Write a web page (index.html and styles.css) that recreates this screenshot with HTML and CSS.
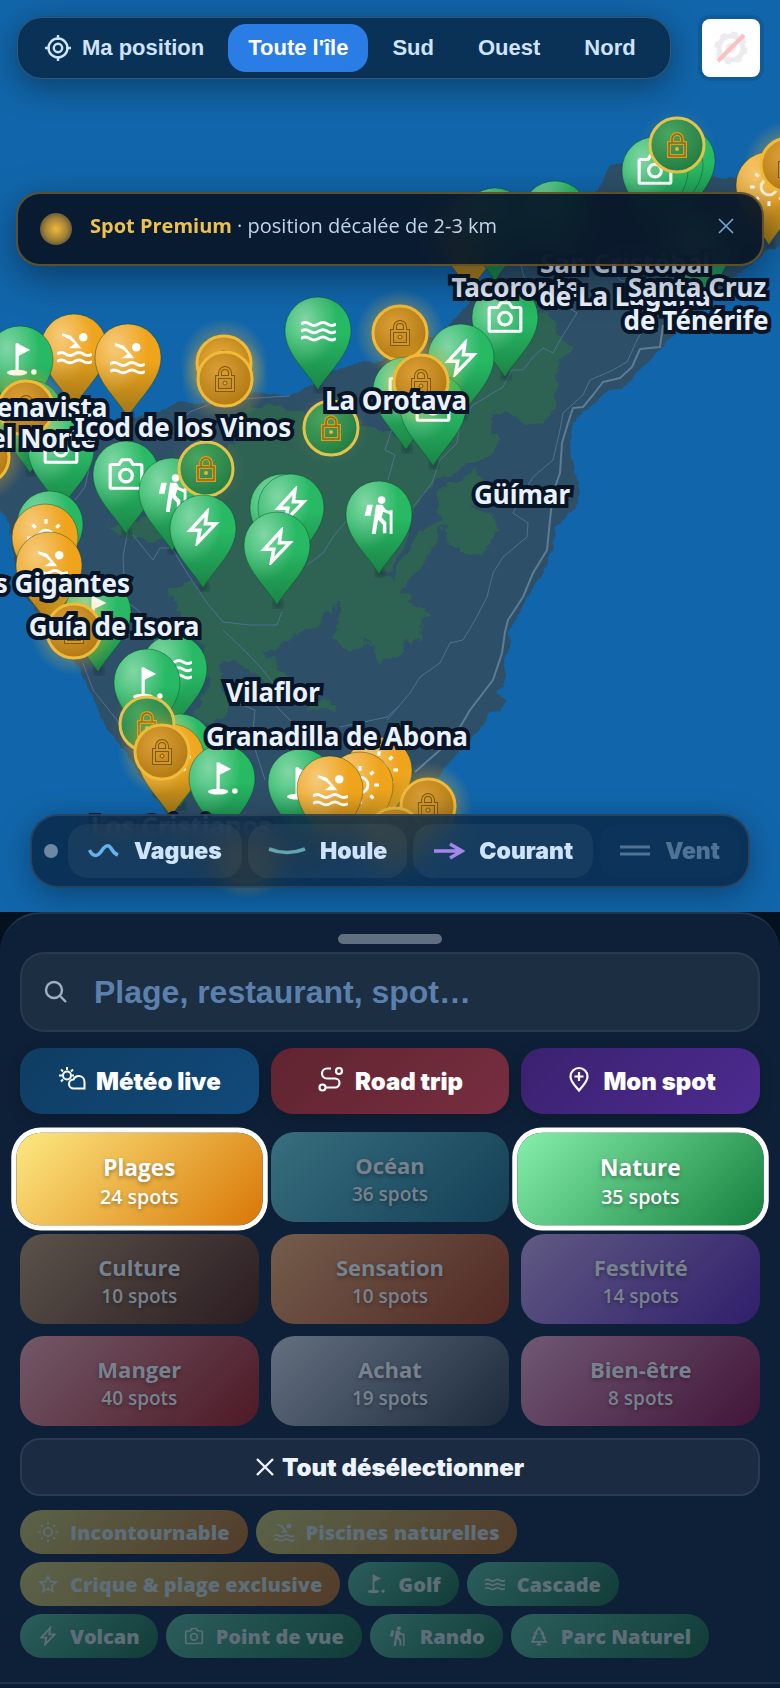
FILE: index.html
```html
<!DOCTYPE html>
<html lang="fr">
<head>
<meta charset="utf-8">
<meta name="viewport" content="width=device-width, initial-scale=1">
<title>Carte de Ténérife</title>
<link rel="stylesheet" href="styles.css">
</head>
<body>
<svg class="defs" width="0" height="0" aria-hidden="true">
  <defs>
    <linearGradient id="shade" x1="0" y1="0" x2="0" y2="1"><stop offset=".4" stop-color="#04200f" stop-opacity="0"/><stop offset="1" stop-color="#04200f" stop-opacity=".35"/></linearGradient>
    <radialGradient id="shine" cx=".3" cy=".24" r=".5"><stop offset="0" stop-color="#fff" stop-opacity=".42"/><stop offset="1" stop-color="#fff" stop-opacity="0"/></radialGradient>
    <radialGradient id="gold" cx=".4" cy=".35" r=".7"><stop offset="0" stop-color="#dda036"/><stop offset="1" stop-color="#b07812"/></radialGradient>
    <radialGradient id="leaf" cx=".35" cy=".3" r=".8"><stop offset="0" stop-color="#4aa560"/><stop offset="1" stop-color="#1f7a40"/></radialGradient>
    <radialGradient id="glow"><stop offset=".5" stop-color="#f5b92e" stop-opacity=".36"/><stop offset="1" stop-color="#f5b92e" stop-opacity="0"/></radialGradient>
    <filter id="rough" x="-5%" y="-5%" width="110%" height="110%"><feTurbulence type="fractalNoise" baseFrequency=".07" numOctaves="3" seed="4"/><feDisplacementMap in="SourceGraphic" scale="16" xChannelSelector="R" yChannelSelector="G"/></filter>
    <filter id="coast" x="-5%" y="-5%" width="110%" height="110%"><feTurbulence type="fractalNoise" baseFrequency=".09" numOctaves="2" seed="9"/><feDisplacementMap in="SourceGraphic" scale="6" xChannelSelector="R" yChannelSelector="G"/></filter>
    <filter id="soft"><feGaussianBlur stdDeviation="3"/></filter>
  </defs>
  <symbol id="pin" viewBox="-40 -40 80 110" overflow="visible">
    <ellipse cx="1" cy="59" rx="5" ry="4" fill="#0a1a2a" opacity=".5" filter="url(#soft)"/>
    <path d="M0 60C-12 40-33 24-33 0a33 33 0 0 1 66 0C33 24 12 40 0 60Z" fill="currentColor"/>
    <path d="M0 60C-12 40-33 24-33 0a33 33 0 0 1 66 0C33 24 12 40 0 60Z" fill="url(#shade)"/>
    <path d="M0 60C-12 40-33 24-33 0a33 33 0 0 1 66 0C33 24 12 40 0 60Z" fill="url(#shine)" stroke="#0a3d20" stroke-opacity=".4"/>
  </symbol>
  <symbol id="padlock" viewBox="-12 -14 24 28">
    <g fill="none" stroke="#80580c" stroke-width="4"><path d="M-5-2V-6a5 5 0 0 1 10 0v4"/><rect x="-8" y="-2" width="16" height="13"/></g>
    <g fill="none" stroke="#cf9828" stroke-width="2"><path d="M-5-2V-6a5 5 0 0 1 10 0v4"/><rect x="-8" y="-2" width="16" height="13"/></g>
    <circle cy="4" r="2" fill="#e0aa35" stroke="#80580c"/>
  </symbol>
  <symbol id="padlock-bright" viewBox="-12 -14 24 28">
    <g fill="none" stroke="#dd9c1c" stroke-width="4"><path d="M-5-2V-6a5 5 0 0 1 10 0v4"/><rect x="-8" y="-2" width="16" height="13"/></g>
    <g fill="none" stroke="#7a7022" stroke-width="1.500"><path d="M-5-2V-6a5 5 0 0 1 10 0v4"/><rect x="-8" y="-2" width="16" height="13"/></g>
    <circle cy="4" r="2" fill="#f0b429"/>
  </symbol>
  <symbol id="lock-gold" viewBox="-50 -50 100 100" overflow="visible"><circle r="44" fill="url(#glow)"/><circle r="27" fill="url(#gold)" stroke="#efbb3a" stroke-width="3"/><use href="#padlock" x="-12" y="-14" width="24" height="28"/></symbol>
  <symbol id="lock-green" viewBox="-50 -50 100 100" overflow="visible"><circle r="38" fill="url(#glow)" opacity=".25"/><circle r="27" fill="url(#leaf)" stroke="#e3c34a" stroke-width="3"/><use href="#padlock-bright" x="-12" y="-14" width="24" height="28"/></symbol>

  <symbol id="i-camera" viewBox="0 0 24 24"><path d="M3 6h4.500l2-3h5l2 3H21a1 1 0 0 1 1 1v13a1 1 0 0 1-1 1H3a1 1 0 0 1-1-1V7a1 1 0 0 1 1-1Z" fill="none" stroke="currentColor" stroke-width="2" stroke-linejoin="round"/><circle cx="12" cy="13" r="4" fill="none" stroke="currentColor" stroke-width="2"/></symbol>
  <symbol id="i-bolt" viewBox="0 0 24 24"><path d="M14.500 2.500 4 14h6L8.500 22 20 10h-6.500Z" fill="none" stroke="currentColor" stroke-width="2.200"/></symbol>
  <symbol id="i-wave" viewBox="0 0 24 24"><g fill="none" stroke="currentColor" stroke-width="2"><path d="M0 7.500q3-2 6 0t6 0 6 0 6 0"/><path d="M0 12.500q3-2 6 0t6 0 6 0 6 0"/><path d="M0 17.500q3-2 6 0t6 0 6 0 6 0"/></g></symbol>
  <symbol id="i-swim" viewBox="0 0 24 24"><circle cx="18" cy="5" r="2.900" fill="currentColor"/><path d="M3.500 2.200 9.500 4l5.500 6.500 1.500 2h-8.500l4-3-3-3-5.500-2.500Z" fill="currentColor"/><g fill="none" stroke="currentColor" stroke-width="2"><path d="M0 16.500q3-2 6 0t6 0 6 0 6 0"/><path d="M0 21.500q3-2 6 0t6 0 6 0 6 0"/></g></symbol>
  <symbol id="i-golf" viewBox="0 0 24 24"><path d="M9 1v19" stroke="currentColor" stroke-width="2.200"/><path d="M9 .800 18 5.500 9 10Z" fill="currentColor"/><ellipse cx="9" cy="21" rx="7" ry="2" fill="currentColor"/><circle cx="20.500" cy="20.500" r="1.900" fill="currentColor"/></symbol>
  <symbol id="i-hike" viewBox="0 0 24 24"><circle cx="13" cy="2.600" r="2.400" fill="currentColor"/><path d="M4 5.500h3.500L6 12.500H2.300Z" fill="currentColor"/><path d="M9.500 5.500h4l2 3 3.500 1.500v2l-5-2-1 3.500 3 3v7h-2.200V18l-3-3-1.500 9H6.800Z" fill="currentColor"/><path d="M19 9v15" stroke="currentColor" stroke-width="1.800"/></symbol>
  <symbol id="i-sun" viewBox="0 0 24 24"><circle cx="12" cy="12" r="5" fill="none" stroke="currentColor" stroke-width="1.800"/><g stroke="currentColor" stroke-width="2"><path d="M12 0v3M12 21v3M0 12h3M21 12h3M3.500 3.500l2 2M18.500 18.500l2 2M3.500 20.500l2-2M18.500 5.500l2-2"/></g></symbol>
  <symbol id="i-star" viewBox="0 0 24 24"><path d="m12 2.500 2.800 6.400 6.900.700-5.200 4.600 1.500 6.800-6-3.500L6 21l1.500-6.800-5.200-4.600 6.900-.700Z" fill="none" stroke="currentColor" stroke-width="2"/></symbol>
  <symbol id="i-tree" viewBox="0 0 24 24"><path d="m12 2 5 7h-2l4 5h-2l3.500 5h-17L7 14H5l4-5H7ZM12 19v4M9 22.500h6" fill="none" stroke="currentColor" stroke-width="2"/></symbol>
</svg>

<main class="app">
<section class="map" aria-label="Carte">
  <svg class="island" viewBox="0 0 780 912" preserveAspectRatio="xMidYMid slice">
    <path filter="url(#coast)" fill="#2f5068" d="M-10 436 40 428 133 418 160 412 178 402 195 403 225 404 255 392 280 396 300 392 315 382 330 371 345 368 360 361 378 362 410 350 436 336 452 322 462 311 476 296 500 262 560 220 598 190 605 174 610 165 624 163 650 170 708 175 722 179 740 177 790 168V242L764 253 748 267 733 277 700 310 675 333 659 350 640 370 622 389 609 390 583 413 573 423 569 447 575 470 580 493 575 508 556 528 553 547 543 573 527 597 516 620 507 632 511 642 505 660 507 678 497 693 506 700 500 712 489 713 479 730 456 755 439 775 410 800 380 835 320 860 260 880 215 886 180 830 150 790 123 750 103 723 97 707 87 687 80 668 45 625 27 597 15 560 7 515-10 505Z"/>
    <g filter="url(#rough)" fill="#2d6352">
      <path d="M250 405 300 410 370 426 407 440 440 425 463 400 480 360 510 340 541 310 570 350 557 370 559 388 545 425 527 423 507 413 492 416 499 440 495 453 463 470 433 482 420 500 410 520 405 545 392 568 345 598 333 606 312 630 288 640 264 650 277 665 292 690 333 702 336 712 305 708 275 690 240 662 220 660 224 690 232 707 212 725 190 718 207 690 205 650 176 610 170 590 190 580 205 595 180 540 155 500 200 500 234 440Z"/>
      <path d="M333 640 340 600 375 570 402 593 434 617 420 625 424 643 405 640 402 654 380 660 372 642 350 652Z"/>
      <path d="M437 490 477 470 490 485 522 490 502 500 472 505 489 513 500 530 483 556 447 544 440 520Z"/>
      <path d="M442 522 425 562 400 592 385 605 395 570 420 530Z"/>
      <path d="M105 530 150 515 175 545 130 535Z"/>
    </g>
    <g class="roads">
      <path class="highway" d="M663 325 660 347 640 349 632 367 620 378 603 382 593 395 583 407 573 408 568 423 562 443 560 473 553 493 550 520 547 550 533 573 523 597 508 620 505 632 502 653 493 680 470 710 460 727 440 750 415 772"/>
      <path d="M655 310 637 340 627 362 613 370 590 380 583 395 563 413 560 430 553 460 533 477 527 487 513 513 528 523 527 537 503 557 493 573 487 597 475 620 463 640 450 643 440 663 420 677 410 693 387 720"/>
      <path d="M520 262 525 280 577 313 560 340 553 353 543 348 533 357 523 370 512 370 503 387 473 405 460 423 457 443 440 460 432 483 413 507"/>
      <path d="M178 424 190 412 215 402 255 398 290 396M600 250 620 280 640 285"/>
      <path d="M92 455 85 487 75 500M128 530 123 557 125 600 140 612 160 650M133 535 153 560 160 548 172 548 187 573 207 603 223 622 250 625 277 625 282 612M223 630 247 653 263 670 273 683 277 707 293 723M230 700 255 710 252 740 265 780M307 565 323 553 333 537 347 520M400 405 385 450 395 455 388 480M83 663 93 690 117 720 130 745M400 705 387 717 340 727"/>
    </g>

    <g class="marks">
      <g class="amber"><use href="#pin" x="430" y="191" width="80" height="110"/></g>
      <g class="green"><use href="#pin" x="455" y="181" width="80" height="110"/><use href="#pin" x="515" y="174" width="80" height="110"/></g>
      <g class="green"><use href="#pin" x="657" y="208" width="80" height="110"/>
        <use href="#pin" x="642" y="120" width="80" height="110"/><use href="#pin" x="630" y="124" width="80" height="110"/><use href="#pin" x="615" y="130" width="80" height="110"/></g>
      <use href="#i-camera" x="636" y="150" width="38" height="38"/>
      <use href="#lock-green" x="627" y="95" width="100" height="100"/>
      <g class="amber"><use href="#pin" x="729" y="145" width="80" height="110"/></g>
      <use href="#i-sun" x="750" y="168" width="38" height="38"/>
      <use href="#lock-gold" x="738" y="115" width="100" height="100"/>

      <g class="green"><use href="#pin" x="278" y="290" width="80" height="110"/><use href="#pin" x="465" y="277" width="80" height="110"/></g>
      <use href="#i-wave" x="301" y="313" width="35" height="35"/>
      <use href="#i-camera" x="486" y="298" width="38" height="38"/>
      <use href="#lock-gold" x="350" y="283" width="100" height="100"/>
      <g class="green"><use href="#pin" x="421" y="317" width="80" height="110"/><use href="#pin" x="366" y="350" width="80" height="110"/></g>
      <use href="#i-bolt" x="442" y="339" width="38" height="38"/>
      <use href="#i-camera" x="387" y="369" width="38" height="38"/>
      <g class="green"><use href="#pin" x="393" y="366" width="80" height="110"/></g>
      <use href="#i-camera" x="414" y="387" width="38" height="38"/>
      <use href="#lock-gold" x="371" y="332" width="100" height="100"/>
      <use href="#lock-green" x="281" y="378" width="100" height="100"/>
      <use href="#lock-gold" x="174" y="313" width="100" height="100"/>
      <use href="#lock-gold" x="175" y="329" width="100" height="100"/>

      <g class="amber"><use href="#pin" x="34" y="307" width="80" height="110"/></g>
      <use href="#i-swim" x="57" y="330" width="35" height="35"/>
      <g class="amber"><use href="#pin" x="88" y="317" width="80" height="110"/></g>
      <use href="#i-swim" x="110" y="340" width="35" height="35"/>
      <g class="green"><use href="#pin" x="-20" y="319" width="80" height="110"/></g>
      <use href="#i-golf" x="4" y="342" width="35" height="35"/>
      <g class="green"><use href="#pin" x="-10" y="373" width="80" height="110"/></g>
      <use href="#lock-gold" x="-68" y="407" width="100" height="100"/>
      <g class="green"><use href="#pin" x="21" y="409" width="80" height="110"/></g>
      <use href="#i-camera" x="42" y="429" width="38" height="38"/>
      <use href="#lock-gold" x="-24" y="358" width="100" height="100"/>
      <g class="green"><use href="#pin" x="86" y="434" width="80" height="110"/></g>
      <use href="#i-camera" x="107" y="455" width="38" height="38"/>
      <g class="green"><use href="#pin" x="132" y="451" width="80" height="110"/></g>
      <use href="#i-hike" x="155" y="474" width="38" height="38"/>
      <use href="#lock-green" x="156" y="419" width="100" height="100"/>
      <g class="green"><use href="#pin" x="163" y="488" width="80" height="110"/></g>
      <use href="#i-bolt" x="184" y="508" width="38" height="38"/>
      <g class="green"><use href="#pin" x="243" y="467" width="80" height="110"/><use href="#pin" x="251" y="467" width="80" height="110"/></g>
      <use href="#i-bolt" x="272" y="486" width="38" height="38"/>
      <g class="green"><use href="#pin" x="237" y="505" width="80" height="110"/><use href="#pin" x="339" y="474" width="80" height="110"/></g>
      <use href="#i-bolt" x="258" y="527" width="38" height="38"/>
      <use href="#i-hike" x="361" y="496" width="38" height="38"/>

      <g class="green"><use href="#pin" x="10" y="484" width="80" height="110"/></g>
      <g class="amber"><use href="#pin" x="5" y="497" width="80" height="110"/></g>
      <use href="#i-sun" x="27" y="519" width="38" height="38"/>
      <g class="amber"><use href="#pin" x="9" y="525" width="80" height="110"/></g>
      <use href="#i-swim" x="33" y="548" width="35" height="35"/>
      <g class="green"><use href="#pin" x="58" y="572" width="80" height="110"/></g>
      <use href="#i-golf" x="80" y="595" width="35" height="35"/>
      <use href="#lock-gold" x="24" y="581" width="100" height="100"/>
      <g class="green"><use href="#pin" x="134" y="628" width="80" height="110"/></g>
      <use href="#i-wave" x="157" y="651" width="35" height="35"/>
      <g class="green"><use href="#pin" x="107" y="642" width="80" height="110"/></g>
      <use href="#i-golf" x="130" y="666" width="35" height="35"/>
      <g class="green"><use href="#pin" x="140" y="707" width="80" height="110"/></g>
      <g class="amber"><use href="#pin" x="131" y="717" width="80" height="110"/></g>
      <use href="#i-sun" x="153" y="738" width="38" height="38"/>
      <use href="#lock-green" x="97" y="674" width="100" height="100"/>
      <use href="#lock-gold" x="112" y="702" width="100" height="100"/>
      <g class="green"><use href="#pin" x="182" y="738" width="80" height="110"/><use href="#pin" x="261" y="742" width="80" height="110"/></g>
      <use href="#i-golf" x="205" y="761" width="35" height="35"/>
      <use href="#i-golf" x="284" y="766" width="35" height="35"/>
      <g class="amber"><use href="#pin" x="339" y="730" width="80" height="110"/></g>
      <use href="#i-sun" x="360" y="751" width="38" height="38"/>
      <g class="amber"><use href="#pin" x="320" y="745" width="80" height="110"/></g>
      <use href="#i-sun" x="341" y="766" width="38" height="38"/>
      <g class="amber"><use href="#pin" x="290" y="749" width="80" height="110"/></g>
      <use href="#i-swim" x="313" y="772" width="35" height="35"/>
      <use href="#lock-gold" x="378" y="756" width="100" height="100"/>
      <use href="#lock-gold" x="345" y="785" width="100" height="100"/>
      <use href="#lock-gold" x="197" y="805" width="100" height="100"/>
    </g>

    <g class="places">
      <text x="35" y="417">Buenavista</text><text x="35" y="448">del Norte</text>
      <text x="183" y="437">Icod de los Vinos</text>
      <text x="396" y="410">La Orotava</text>
      <text x="516" y="297">Tacoronte</text>
      <text x="625" y="273">San Cristóbal</text><text x="625" y="306">de La Laguna</text>
      <text x="697" y="297">Santa Cruz</text><text x="696" y="330">de Ténérife</text>
      <text x="522" y="504">Güímar</text>
      <text x="47" y="593">Los Gigantes</text>
      <text x="114" y="636">Guía de Isora</text>
      <text x="273" y="702">Vilaflor</text>
      <text x="337" y="746">Granadilla de Abona</text>
      <text x="181" y="836">Los Cristianos</text>
    </g>
  </svg>

  <div class="overlay">
    <div class="top-row">
      <nav class="zones" aria-label="Zones">
        <button type="button"><svg class="locate" viewBox="0 0 28 28" fill="none" stroke="currentColor" stroke-width="2.400" aria-hidden="true"><circle cx="14" cy="14" r="9.500"/><circle cx="14" cy="14" r="4.200"/><path d="M14 1v5M14 22v5M1 14h5M22 14h5"/></svg>Ma position</button>
        <button type="button" class="active">Toute l'île</button>
        <button type="button">Sud</button>
        <button type="button">Ouest</button>
        <button type="button">Nord</button>
      </nav>
      <button type="button" class="gps" aria-label="Géolocalisation indisponible"><svg viewBox="0 0 36 36" aria-hidden="true"><circle cx="18" cy="18" r="12" fill="none" stroke="#ececee" stroke-width="5"/><circle cx="18" cy="18" r="14.500" fill="none" stroke="#ececee" stroke-width="4" stroke-dasharray="6 5.390"/><circle cx="18" cy="18" r="5" fill="#ececee"/><path d="M5 31 31 5" stroke="#fcc0c0" stroke-width="4"/></svg></button>
    </div>
    <div class="notice" role="status">
      <span class="halo"></span>
      <p><strong>Spot Premium</strong> · position décalée de 2-3 km</p>
      <button type="button" aria-label="Fermer"><svg viewBox="0 0 16 16" aria-hidden="true"><path d="m1 1 14 14M15 1 1 15" stroke="currentColor" stroke-width="1.500"/></svg></button>
    </div>
    <div class="layers" role="group" aria-label="Couches">
      <span class="led"></span>
      <button type="button"><svg viewBox="0 0 32 20" fill="none" stroke="#66b2ea" stroke-width="3.500" aria-hidden="true"><path d="M1.500 9c3.500 7 8 7 12 1s7-7 10-2 4 5 6.500 6"/></svg>Vagues</button>
      <button type="button"><svg class="wide" viewBox="0 0 38 20" fill="none" stroke="#61a5ae" stroke-width="3.500" aria-hidden="true"><path d="M1 8q18 7 36 0"/></svg>Houle</button>
      <button type="button"><svg viewBox="0 0 32 20" fill="none" stroke="#a586ea" stroke-width="3.500" aria-hidden="true"><path d="M1 10h28M17 3l12 7-12 7"/></svg>Courant</button>
      <button type="button" class="off"><svg viewBox="0 0 32 20" fill="none" stroke="currentColor" stroke-width="3" aria-hidden="true"><path d="M1 6h30M1 13h30"/></svg>Vent</button>
    </div>
  </div>
</section>

<div class="dock">
<section class="sheet" aria-label="Recherche et catégories">
  <span class="handle"></span>
  <label class="search">
    <svg viewBox="0 0 24 24" fill="none" stroke="currentColor" stroke-width="2.400" aria-hidden="true"><circle cx="10" cy="10" r="8"/><path d="m16 16 6 6"/></svg>
    <input type="search" placeholder="Plage, restaurant, spot…" aria-label="Rechercher">
  </label>
  <div class="actions">
    <button type="button" class="weather"><svg viewBox="0 0 28 24" fill="none" stroke="currentColor" stroke-width="2" aria-hidden="true"><circle cx="9" cy="8.500" r="4"/><path d="M9 0v3M1 8.500h3M3 2.500l2 2M15 2.500l-2 2M3 14.500l2-2M14 8.500h2"/><path d="M16 21.500c-3 0-5-2-5-4.500s2-4.500 4.500-4.500c1-2.300 3-3.500 5-3.500 3.500 0 6 2.600 6 6v6.500Z" fill="#0f4270"/></svg>Météo live</button>
    <button type="button" class="road"><svg viewBox="0 0 26 26" fill="none" stroke="currentColor" stroke-width="2.200" aria-hidden="true"><circle cx="4.500" cy="21.500" r="3"/><circle cx="21" cy="5" r="3"/><path d="M8 21.500h9a4.500 4.500 0 0 0 0-9H9a5 5 0 0 1 0-10h4"/></svg>Road trip</button>
    <button type="button" class="mine"><svg viewBox="0 0 24 26" fill="none" stroke="currentColor" stroke-width="2.200" aria-hidden="true"><path d="M12 24.500C9 20.500 3.500 16 3.500 10.500a8.500 8.500 0 0 1 17 0C20.500 16 15 20.500 12 24.500ZM12 6v9M7.500 10.500h9"/></svg>Mon spot</button>
  </div>
  <div class="cats">
    <button type="button" class="cat beach on"><b>Plages</b><span>24 spots</span></button>
    <button type="button" class="cat ocean"><b>Océan</b><span>36 spots</span></button>
    <button type="button" class="cat nature on"><b>Nature</b><span>35 spots</span></button>
    <button type="button" class="cat culture"><b>Culture</b><span>10 spots</span></button>
    <button type="button" class="cat thrill"><b>Sensation</b><span>10 spots</span></button>
    <button type="button" class="cat party"><b>Festivité</b><span>14 spots</span></button>
    <button type="button" class="cat food"><b>Manger</b><span>40 spots</span></button>
    <button type="button" class="cat shop"><b>Achat</b><span>19 spots</span></button>
    <button type="button" class="cat spa"><b>Bien-être</b><span>8 spots</span></button>
  </div>
  <button type="button" class="clear"><svg viewBox="0 0 18 18" aria-hidden="true"><path d="m1 1 16 16M17 1 1 17" stroke="currentColor" stroke-width="2.400"/></svg>Tout désélectionner</button>
  <div class="chips">
    <button type="button" class="sand"><svg aria-hidden="true"><use href="#i-sun"/></svg>Incontournable</button>
    <button type="button" class="sand"><svg aria-hidden="true"><use href="#i-swim"/></svg>Piscines naturelles</button>
    <button type="button" class="sand"><svg aria-hidden="true"><use href="#i-star"/></svg>Crique &amp; plage exclusive</button>
    <button type="button"><svg aria-hidden="true"><use href="#i-golf"/></svg>Golf</button>
    <button type="button"><svg aria-hidden="true"><use href="#i-wave"/></svg>Cascade</button>
    <button type="button"><svg aria-hidden="true"><use href="#i-bolt"/></svg>Volcan</button>
    <button type="button"><svg aria-hidden="true"><use href="#i-camera"/></svg>Point de vue</button>
    <button type="button"><svg aria-hidden="true"><use href="#i-hike"/></svg>Rando</button>
    <button type="button"><svg aria-hidden="true"><use href="#i-tree"/></svg>Parc Naturel</button>
  </div>
</section>
<div class="tray"></div>
</div>
</main>
</body>
</html>
```

FILE: styles.css
```css
* { box-sizing: border-box; }

body {
  margin: 0;
  background: #04121f;
  font-family: "Open Sans", "Noto Sans", sans-serif;
}

button {
  margin: 0;
  padding: 0;
  border: 0;
  background: none;
  color: inherit;
  font: inherit;
  cursor: pointer;
}

p { margin: 0; }

.defs { position: absolute; }

.app {
  display: flex;
  flex-direction: column;
  min-height: 100vh;
}

/* Map */
.map {
  position: relative;
  flex: 1;
  min-height: 480px;
  overflow: hidden;
  background: #1166ab;
}

.island {
  position: absolute;
  width: 100%;
  height: 100%;
}

.roads path {
  fill: none;
  stroke: #517092;
  stroke-width: 1;
  stroke-linejoin: round;
}

.roads .highway { stroke: #5d7c98; stroke-width: 2; }

.marks { color: #fff; }
.green { color: #27b964; }
.amber { color: #efa41c; }

.places text {
  fill: #eaf2ff;
  stroke: #071526;
  stroke-width: 8px;
  paint-order: stroke;
  text-anchor: middle;
  font: 700 26px "Noto Sans", sans-serif;
}

.overlay {
  position: absolute;
  inset: 0;
  display: flex;
  flex-direction: column;
  padding: 16px 16px 24px;
}

.top-row {
  display: flex;
  align-items: center;
  justify-content: space-between;
  padding-right: 4px;
}

.zones {
  display: flex;
  gap: 4px;
  padding: 6px 14px 6px 6px;
  border: 2px solid rgba(60, 70, 90, .4);
  border-radius: 26px;
  background: #0a3156;
  background-clip: padding-box;
  box-shadow: 0 8px 32px rgba(6, 20, 34, .45);
  color: #cfe3fb;
  font: 700 22px "Liberation Sans", sans-serif;
}

.zones button {
  display: flex;
  align-items: center;
  gap: 10px;
  height: 48px;
  padding: 0 20px;
  border-radius: 18px;
}

.zones .active { background: #2b7de6; color: #fff; }
.locate { width: 28px; height: 28px; }

.gps {
  width: 58px;
  height: 58px;
  padding: 11px;
  border-radius: 8px;
  background: #fff;
  box-shadow: 0 0 0 4px rgba(0, 0, 0, .1);
}

.gps svg { display: block; }

.notice {
  display: flex;
  align-items: center;
  gap: 18px;
  min-height: 74px;
  margin-top: 112px;
  padding: 0 28px 0 22px;
  border: 2px solid rgba(214, 158, 46, .4);
  border-radius: 24px;
  background: rgba(8, 22, 40, .93);
  backdrop-filter: blur(16px);
  box-shadow: 0 12px 36px rgba(6, 20, 34, .5);
  color: #c3d4ea;
  font-size: 20px;
  line-height: 32px;
}

.notice p { flex: 1; margin-bottom: 6px; }
.notice strong { color: #eec04c; }

.notice button { color: #7fa8dc; }
.notice button svg { display: block; width: 16px; height: 16px; margin-bottom: 6px; }

.halo {
  width: 32px;
  height: 32px;
  border-radius: 50%;
  background: radial-gradient(circle, #eeb93a 0%, #a08038 50%, #6b5f33 70%);
}

.layers {
  display: flex;
  align-items: center;
  gap: 6px;
  margin: auto 14px 0;
  padding: 8px;
  border: 2px solid rgba(110, 110, 120, .3);
  border-radius: 28px;
  background: rgba(9, 40, 72, .84);
  backdrop-filter: blur(12px);
  box-shadow: 0 8px 32px rgba(6, 20, 34, .4);
  color: #cfe3fb;
  font: 900 23px Inter, "Liberation Sans", sans-serif;
}

.layers button {
  display: flex;
  flex: auto;
  align-items: center;
  justify-content: center;
  gap: 14px;
  height: 54px;
  border-radius: 20px;
  background: rgba(255, 255, 255, .05);
}

.layers .off { background: rgba(255, 255, 255, .01); color: #507394; }
.layers svg { width: 32px; height: 20px; }
.layers .wide { width: 38px; }

.led {
  width: 14px;
  height: 14px;
  margin: 0 4px;
  border-radius: 50%;
  background: #6c88a4;
}

/* Bottom sheet */
.dock { background: #04121f; }

.sheet {
  display: flex;
  flex-direction: column;
  padding: 20px 20px 24px;
  border-top: 2px solid #20344d;
  border-radius: 40px 40px 0 0;
  background: #0e2038;
}

.handle {
  align-self: center;
  width: 104px;
  height: 10px;
  border-radius: 5px;
  background: #616f80;
}

.search {
  display: flex;
  align-items: center;
  gap: 26px;
  height: 80px;
  margin-top: 8px;
  padding: 0 24px 0 22px;
  border: 2px solid #28394d;
  border-radius: 24px;
  background: #1c2e41;
  color: #9fb0c0;
}

.search svg { flex: none; width: 24px; height: 24px; }

.search input {
  flex: 1;
  min-width: 0;
  padding: 0;
  border: 0;
  outline: 0;
  background: none;
  color: #dce9fa;
  font: 700 32px "Liberation Sans", sans-serif;
}

.search input::placeholder { color: #5c80ad; opacity: 1; }

.actions,
.cats {
  display: grid;
  grid-template-columns: repeat(3, 1fr);
  gap: 12px;
}

.actions { margin-top: 16px; color: #fff; font: 900 24px Inter, "Liberation Sans", sans-serif; }

.actions button {
  display: flex;
  align-items: center;
  justify-content: center;
  gap: 10px;
  height: 66px;
  border-radius: 22px;
  box-shadow: 0 4px 14px rgba(0, 0, 0, .2);
}

.actions svg { width: 28px; height: 26px; margin-bottom: 4px; }
.weather { background: linear-gradient(135deg, #0f3d62, #114a7c); }
.road { background: linear-gradient(135deg, #602430, #772e40); }
.mine { background: linear-gradient(135deg, #3b2170, #4c2b8f); }

.cats { margin-top: 18px; }

.cat {
  display: flex;
  flex-direction: column;
  align-items: center;
  justify-content: center;
  height: 90px;
  padding-top: 3px;
  border-radius: 24px;
  color: #78828f;
  text-shadow: 0 2px 4px rgba(0, 0, 0, .35);
}

.cat b { font-size: 22px; line-height: 30px; }
.cat span { font-size: 19px; font-weight: 600; line-height: 28px; }

.cat.on {
  color: #fff;
  transform: translateY(2px) scale(1.03);
  box-shadow: 0 0 0 5px #fff;
}

.beach { background: linear-gradient(135deg, #fde982, #d97706); }
.ocean { background: linear-gradient(135deg, #376e7e, #143f56); }
.nature { background: linear-gradient(135deg, #86efac, #15803d); }
.culture { background: linear-gradient(135deg, #5b534b, #2b1c21); }
.thrill { background: linear-gradient(135deg, #745d4c, #512924); }
.party { background: linear-gradient(135deg, #605a82, #301e6c); }
.food { background: linear-gradient(135deg, #725868, #4e1925); }
.shop { background: linear-gradient(135deg, #647080, #1b293b); }
.spa { background: linear-gradient(135deg, #6f5873, #421538); }

.clear {
  display: flex;
  align-items: center;
  justify-content: center;
  gap: 8px;
  height: 58px;
  margin-top: 12px;
  border: 2px solid #2a3a52;
  border-radius: 20px;
  background: #1b2b42;
  color: #eef4ff;
  font: 900 24px Inter, "Liberation Sans", sans-serif;
}

.clear svg { width: 18px; height: 18px; }

.chips {
  display: flex;
  flex-wrap: wrap;
  gap: 8px;
  margin-top: 14px;
  color: #5d6e78;
  font-size: 20px;
  font-weight: 800;
  text-shadow: 0 2px 4px rgba(0, 0, 0, .35);
}

.chips button {
  display: flex;
  align-items: center;
  gap: 12px;
  height: 44px;
  padding: 0 18px;
  border-radius: 22px;
  background: linear-gradient(135deg, #2b5e5b, #113c38);
}

.chips .sand { background: linear-gradient(135deg, #5a6349, #533c29); }
.chips svg { width: 20px; height: 20px; }

.tray {
  height: 6px;
  border-top: 2px solid #20344d;
  background: #0c1e33;
}
```
